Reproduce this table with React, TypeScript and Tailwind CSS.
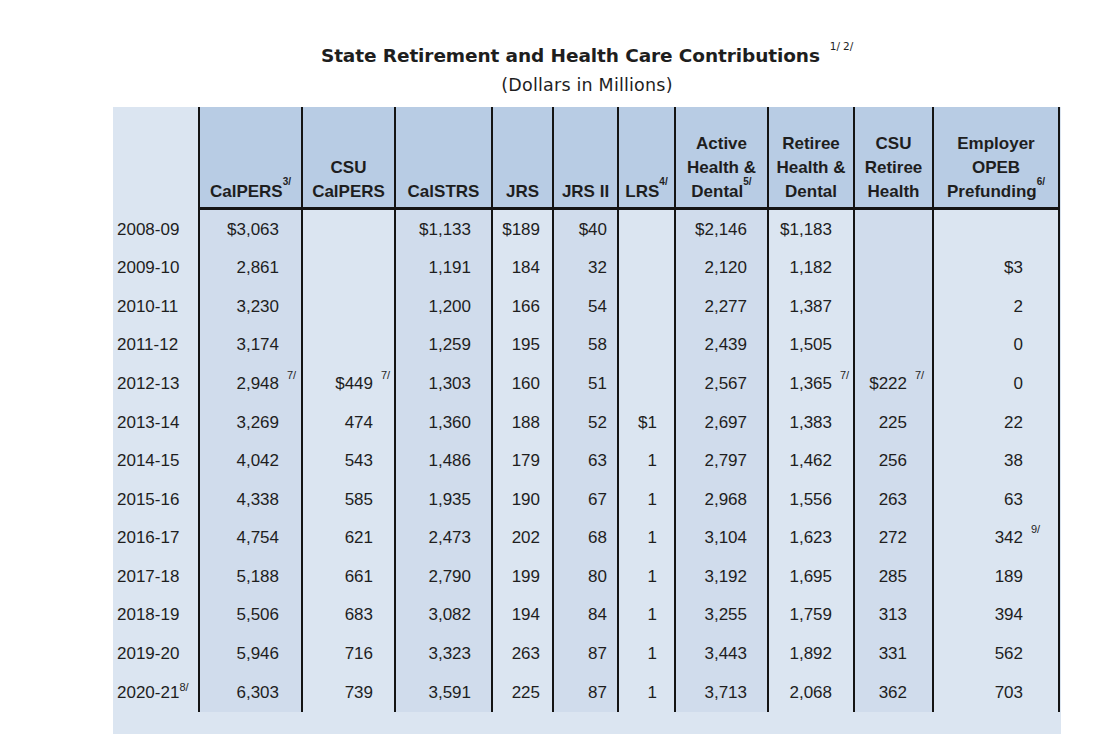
type Col = {
  head: string[];
  note?: string;
  dark: boolean;
  w: string;
  pad: string;
};

const cols: Col[] = [
  { head: ["CalPERS"], note: "3/", dark: true, w: "w-[103px]", pad: "pr-[22px]" },
  { head: ["CSU", "CalPERS"], dark: false, w: "w-[93px]", pad: "pr-[21px]" },
  { head: ["CalSTRS"], dark: true, w: "w-[97px]", pad: "pr-[20px]" },
  { head: ["JRS"], dark: false, w: "w-[61px]", pad: "pr-[12px]" },
  { head: ["JRS II"], dark: true, w: "w-[65px]", pad: "pr-[10px]" },
  { head: ["LRS"], note: "4/", dark: false, w: "w-[57px]", pad: "pr-[17px]" },
  { head: ["Active", "Health &", "Dental"], note: "5/", dark: true, w: "w-[93px]", pad: "pr-[20px]" },
  { head: ["Retiree", "Health &", "Dental"], dark: false, w: "w-[86px]", pad: "pr-[21px]" },
  { head: ["CSU", "Retiree", "Health"], dark: true, w: "w-[79px]", pad: "pr-[25px]" },
  { head: ["Employer", "OPEB", "Prefunding"], note: "6/", dark: false, w: "w-[128px]", pad: "pr-[35px]" },
];

// value|note
const rows: string[][] = [
  ["2008-09", "$3,063", "", "$1,133", "$189", "$40", "", "$2,146", "$1,183", "", ""],
  ["2009-10", "2,861", "", "1,191", "184", "32", "", "2,120", "1,182", "", "$3"],
  ["2010-11", "3,230", "", "1,200", "166", "54", "", "2,277", "1,387", "", "2"],
  ["2011-12", "3,174", "", "1,259", "195", "58", "", "2,439", "1,505", "", "0"],
  ["2012-13", "2,948|7/", "$449|7/", "1,303", "160", "51", "", "2,567", "1,365|7/", "$222|7/", "0"],
  ["2013-14", "3,269", "474", "1,360", "188", "52", "$1", "2,697", "1,383", "225", "22"],
  ["2014-15", "4,042", "543", "1,486", "179", "63", "1", "2,797", "1,462", "256", "38"],
  ["2015-16", "4,338", "585", "1,935", "190", "67", "1", "2,968", "1,556", "263", "63"],
  ["2016-17", "4,754", "621", "2,473", "202", "68", "1", "3,104", "1,623", "272", "342|9/"],
  ["2017-18", "5,188", "661", "2,790", "199", "80", "1", "3,192", "1,695", "285", "189"],
  ["2018-19", "5,506", "683", "3,082", "194", "84", "1", "3,255", "1,759", "313", "394"],
  ["2019-20", "5,946", "716", "3,323", "263", "87", "1", "3,443", "1,892", "331", "562"],
  ["2020-21|8/", "6,303", "739", "3,591", "225", "87", "1", "3,713", "2,068", "362", "703"],
];

const Value = ({ text }: { text: string }) => {
  const [v, note] = text.split("|");
  return (
    <span className="relative">
      {v}
      {note && (
        <span className="absolute left-full top-[-1px] ml-[8px] text-[11px] leading-none">{note}</span>
      )}
    </span>
  );
};

export default function App() {
  return (
    <div className="min-h-[734px] bg-white text-[#1e1e1e] overflow-hidden" style={{ fontFamily: '"Liberation Sans", Arial, sans-serif' }}>
      <div className="ml-[113px] w-[948px]">
        <div className="h-[107px] pt-[43px] flex flex-col items-center">
          <h1 className="text-[18.5px] font-bold leading-[26px] tracking-[-0.1px]" style={{ fontFamily: '"DejaVu Sans", sans-serif' }}>
            State Retirement and Health Care Contributions
            <sup className="ml-[10px] text-[10.5px] font-normal align-[7px]">1/ 2/</sup>
          </h1>
          <div className="text-[17.5px] leading-[24px] mt-[4px] tracking-[0.2px]" style={{ fontFamily: '"DejaVu Sans", sans-serif' }}>
            (Dollars in Millions)
          </div>
        </div>

        <div className="flex bg-[#dbe5f1] pb-[40px] text-[17px]">
          <div className="w-[85px] shrink-0">
            <div className="h-[103px]" />
            {rows.map((r) => {
              const [y, note] = r[0].split("|");
              return (
                <div key={y} className="h-[38.6px] flex items-center pl-[4px]">
                  {y}
                  {note && <sup className="text-[11px] align-[7px]">{note}</sup>}
                </div>
              );
            })}
          </div>

          {cols.map((c, i) => (
            <div
              key={i}
              className={`${c.w} shrink-0 border-l-2 border-[#141414] ${i === cols.length - 1 ? "border-r-2" : ""} ${c.dark ? "bg-[#d0dcec]" : ""}`}
            >
              <div className="h-[103px] bg-[#b8cce4] border-b-[3px] border-[#141414] flex flex-col justify-end items-center pb-[3px] font-bold leading-[24px] text-center">
                {c.head.map((h, j) => (
                  <div key={j} className="whitespace-nowrap">
                    {h}
                    {c.note && j === c.head.length - 1 && (
                      <sup className="text-[10px] align-[7px]">{c.note}</sup>
                    )}
                  </div>
                ))}
              </div>
              {rows.map((r, k) => (
                <div key={k} className={`h-[38.6px] flex items-center justify-end ${c.pad}`}>
                  {r[i + 1] && <Value text={r[i + 1]} />}
                </div>
              ))}
            </div>
          ))}
        </div>
      </div>
    </div>
  );
}
